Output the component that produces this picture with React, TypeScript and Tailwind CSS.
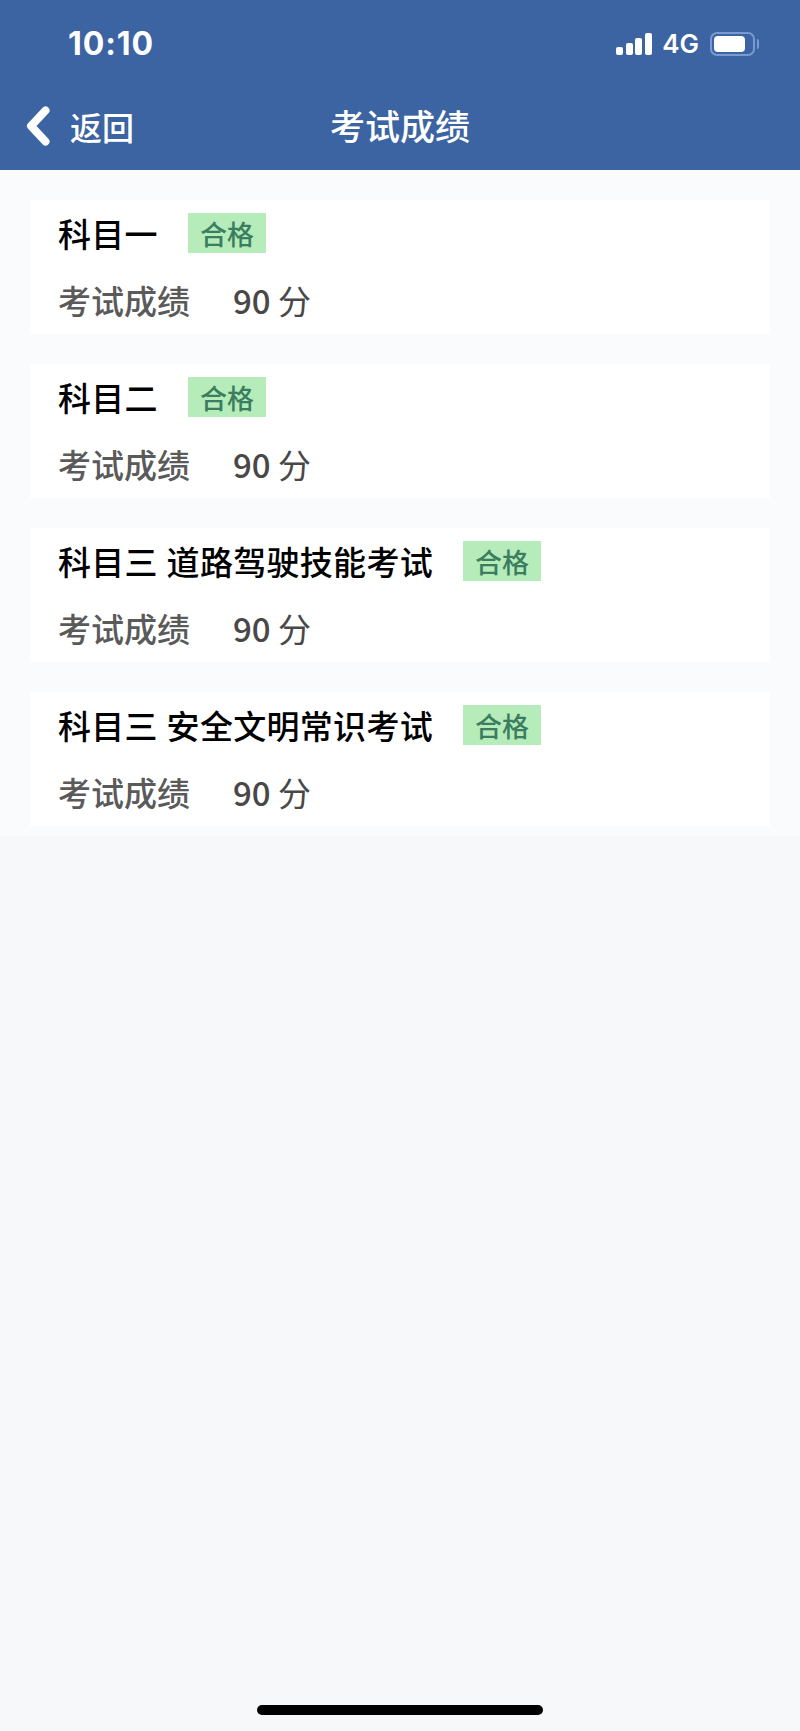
import React from 'react'

const subjects = ['科目一', '科目二', '科目三 道路驾驶技能考试', '科目三 安全文明常识考试']

function StatusBar() {
  return (
    <div className="flex h-[86px] items-center justify-between pl-[68px] pr-[41px] pt-[2px]">
      <span className="font-['Inter',sans-serif] text-[32px] font-bold leading-none tracking-[0.9px]">10:10</span>
      <div className="flex items-center">
        <svg width="36" height="22" viewBox="0 0 36 22" fill="white">
          <rect x="0" y="14" width="7" height="8" rx="2" />
          <rect x="10" y="10" width="7" height="12" rx="2" />
          <rect x="19" y="5" width="7" height="17" rx="2" />
          <rect x="29" y="0" width="7" height="22" rx="2" />
        </svg>
        <span className="ml-[10px] font-['Inter',sans-serif] text-[26px] font-semibold leading-none">4G</span>
        <div className="ml-[11px] flex h-[24px] w-[45px] items-center rounded-[7px] border-2 border-[#7a9bd0] p-[2px]">
          <div className="h-full w-[31px] rounded-[4px] bg-white" />
        </div>
        <div className="ml-[2px] h-[10px] w-[2px] rounded-r-full bg-[#7a9bd0]" />
      </div>
    </div>
  )
}

function NavBar() {
  return (
    <div className="relative flex h-[84px] items-start justify-center pt-[18px]">
      <div className="absolute left-[26px] top-[20px] flex items-center">
        <svg width="24" height="40" viewBox="0 0 24 40" fill="none">
          <path d="M19.5 4.5 L5 20 L19.5 35.5" stroke="white" strokeWidth="8" strokeLinecap="round" strokeLinejoin="round" />
        </svg>
        <span className="ml-[20px] text-[32px] font-medium leading-[40px]">返回</span>
      </div>
      <span className="text-[35px] font-medium leading-[42px]">考试成绩</span>
    </div>
  )
}

function ScoreCard({ name }: { name: string }) {
  return (
    <div className="h-[134px] bg-white pl-[28px] pt-[13px]">
      <div className="flex h-[40px] items-center">
        <span className="text-[33px] font-medium leading-[39px] tracking-[0.3px] text-black [word-spacing:1px]">{name}</span>
        <span className="ml-[30px] flex h-[40px] w-[78px] items-center justify-center bg-[#b5ecba] text-[27px] font-medium leading-none text-[#3a7d5f]">
          合格
        </span>
      </div>
      <div className="mt-[27px] flex h-[40px] items-center text-[#484848]">
        <span className="w-[175px] text-[33px] font-medium leading-[40px] text-[#5a5a5a]">考试成绩</span>
        <span className="text-[33px] font-medium leading-[40px]">
          90 <span className="font-normal">分</span>
        </span>
      </div>
    </div>
  )
}

export default function App() {
  return (
    <div className="flex min-h-[1731px] flex-col bg-[#f6f8fa] font-['Noto_Sans_CJK_SC',sans-serif]">
      <div className="h-[170px] bg-[#3c64a2] text-white">
        <StatusBar />
        <NavBar />
      </div>
      <div className="flex flex-col gap-[30px] bg-[#fafbfd] px-[30px] pb-[10px] pt-[30px]">
        {subjects.map((s, i) => (
          <ScoreCard key={i} name={s} />
        ))}
      </div>
      <div className="mt-auto flex justify-center pb-[16px]">
        <div className="h-[10px] w-[286px] rounded-full bg-black" />
      </div>
    </div>
  )
}
